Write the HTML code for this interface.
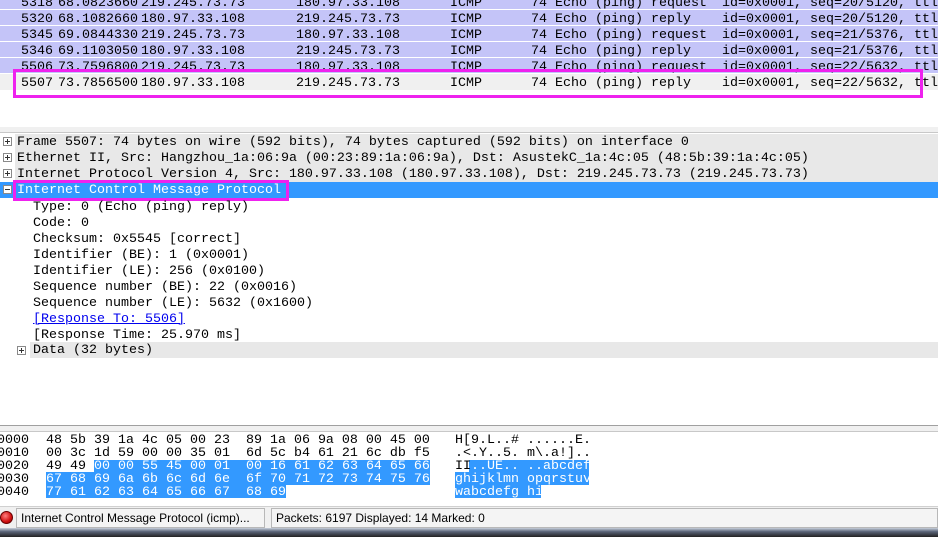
<!DOCTYPE html>
<html><head><meta charset="utf-8"><style>
*{margin:0;padding:0;box-sizing:border-box}
body{width:938px;height:537px;overflow:hidden;background:#fff;position:relative;font-family:"Liberation Mono",monospace;font-size:13.33px;color:#000}
.a{position:absolute;white-space:pre;line-height:16px;margin-top:2px}
.pr{position:absolute;left:0;width:938px;height:15px;background:#c4c4f8}
.pr span{position:absolute;top:2px;line-height:15px;white-space:pre}
.dr{position:absolute;left:15px;right:0;height:16px;background:#e8e8e8}
.pl{position:absolute;width:9px;height:9px;border:1px solid #8a8a8a;background:#fff;font-size:0}
.pl:before{content:"";position:absolute;left:1px;top:3px;width:5px;height:1px;background:#333}
.pl.p:after{content:"";position:absolute;left:3px;top:1px;width:1px;height:5px;background:#333}
.hx{position:absolute;font-size:13.33px;line-height:13px;white-space:pre}
.hl{position:absolute;background:#3399ff;height:13px}
</style></head><body>
<div class="pr" style="top:-6px"><span style="left:21px">5318</span><span style="left:58px">68.0823660</span><span style="left:141px">219.245.73.73</span><span style="left:296px">180.97.33.108</span><span style="left:450px">ICMP</span><span style="left:531px">74 Echo (ping) request</span><span style="left:722px">id=0x0001, seq=20/5120, ttl</span></div>
<div class="pr" style="top:10px"><span style="left:21px">5320</span><span style="left:58px">68.1082660</span><span style="left:141px">180.97.33.108</span><span style="left:296px">219.245.73.73</span><span style="left:450px">ICMP</span><span style="left:531px">74 Echo (ping) reply</span><span style="left:722px">id=0x0001, seq=20/5120, ttl</span></div>
<div class="pr" style="top:26px"><span style="left:21px">5345</span><span style="left:58px">69.0844330</span><span style="left:141px">219.245.73.73</span><span style="left:296px">180.97.33.108</span><span style="left:450px">ICMP</span><span style="left:531px">74 Echo (ping) request</span><span style="left:722px">id=0x0001, seq=21/5376, ttl</span></div>
<div class="pr" style="top:42px"><span style="left:21px">5346</span><span style="left:58px">69.1103050</span><span style="left:141px">180.97.33.108</span><span style="left:296px">219.245.73.73</span><span style="left:450px">ICMP</span><span style="left:531px">74 Echo (ping) reply</span><span style="left:722px">id=0x0001, seq=21/5376, ttl</span></div>
<div class="pr" style="top:58px"><span style="left:21px">5506</span><span style="left:58px">73.7596800</span><span style="left:141px">219.245.73.73</span><span style="left:296px">180.97.33.108</span><span style="left:450px">ICMP</span><span style="left:531px">74 Echo (ping) request</span><span style="left:722px">id=0x0001, seq=22/5632, ttl</span></div>
<div class="pr" style="top:74px;height:16px;background:#f0f0f0"><span style="left:21px;line-height:16px">5507</span><span style="left:58px;line-height:16px">73.7856500</span><span style="left:141px;line-height:16px">180.97.33.108</span><span style="left:296px;line-height:16px">219.245.73.73</span><span style="left:450px;line-height:16px">ICMP</span><span style="left:531px;line-height:16px">74 Echo (ping) reply</span><span style="left:722px;line-height:16px">id=0x0001, seq=22/5632, ttl</span></div>
<div style="position:absolute;left:13px;top:69px;width:910px;height:29px;border:3px solid #ee22ee"></div>
<div style="position:absolute;left:0;top:127px;width:938px;height:6px;background:#f0f0f0;border-bottom:1px solid #c8c8c8"></div>
<div class="dr" style="top:134px"></div><div class="pl p" style="left:3px;top:137px"></div><div class="a" style="left:17px;top:133px">Frame 5507: 74 bytes on wire (592 bits), 74 bytes captured (592 bits) on interface 0</div>
<div class="dr" style="top:150px"></div><div class="pl p" style="left:3px;top:153px"></div><div class="a" style="left:17px;top:149px">Ethernet II, Src: Hangzhou_1a:06:9a (00:23:89:1a:06:9a), Dst: AsustekC_1a:4c:05 (48:5b:39:1a:4c:05)</div>
<div class="dr" style="top:166px"></div><div class="pl p" style="left:3px;top:169px"></div><div class="a" style="left:17px;top:165px">Internet Protocol Version 4, Src: 180.97.33.108 (180.97.33.108), Dst: 219.245.73.73 (219.245.73.73)</div>
<div class="dr" style="top:182px;left:0;background:#3399ff"></div><div class="pl" style="left:3px;top:185px"></div><div class="a" style="left:17px;top:181px;color:#fff">Internet Control Message Protocol</div>
<div style="position:absolute;left:13px;top:180px;width:276px;height:21px;border:3px solid #ee22ee"></div>
<div class="a" style="left:33px;top:198px">Type: 0 (Echo (ping) reply)</div>
<div class="a" style="left:33px;top:214px">Code: 0</div>
<div class="a" style="left:33px;top:230px">Checksum: 0x5545 [correct]</div>
<div class="a" style="left:33px;top:246px">Identifier (BE): 1 (0x0001)</div>
<div class="a" style="left:33px;top:262px">Identifier (LE): 256 (0x0100)</div>
<div class="a" style="left:33px;top:278px">Sequence number (BE): 22 (0x0016)</div>
<div class="a" style="left:33px;top:294px">Sequence number (LE): 5632 (0x1600)</div>
<div class="a" style="left:33px;top:310px;color:#0000ee;text-decoration:underline">[Response To: 5506]</div>
<div class="a" style="left:33px;top:326px">[Response Time: 25.970 ms]</div>
<div class="dr" style="top:342px;left:30px"></div><div class="pl p" style="left:17px;top:346px"></div><div class="a" style="left:33px;top:341px">Data (32 bytes)</div>
<div style="position:absolute;left:0;top:425px;width:938px;height:7px;background:#f0f0f0;border-top:1px solid #a0a0a0;border-bottom:1px solid #c8c8c8"></div>
<div class="hl" style="left:94px;top:460px;width:336px"></div>
<div class="hl" style="left:46px;top:472px;width:384px"></div>
<div class="hl" style="left:46px;top:485px;width:240px"></div>
<div class="hl" style="left:469px;top:460px;width:120px"></div>
<div class="hl" style="left:455px;top:472px;width:134px"></div>
<div class="hl" style="left:455px;top:485px;width:86px"></div>
<div class="hx" style="left:-3px;top:434px">0000
0010
0020
0030
0040</div>
<div class="hx" style="left:46px;top:434px">48 5b 39 1a 4c 05 00 23  89 1a 06 9a 08 00 45 00
00 3c 1d 59 00 00 35 01  6d 5c b4 61 21 6c db f5
49 49 <span style="color:#fff">00 00 55 45 00 01  00 16 61 62 63 64 65 66</span>
<span style="color:#fff">67 68 69 6a 6b 6c 6d 6e  6f 70 71 72 73 74 75 76</span>
<span style="color:#fff">77 61 62 63 64 65 66 67  68 69</span></div>
<div class="hx" style="left:455px;top:434px">H[9.L..# ......E.
.&lt;.Y..5. m\.a!]..
II<span style="color:#fff">..UE.. ..abcdef</span>
<span style="color:#fff">ghijklmn opqrstuv</span>
<span style="color:#fff">wabcdefg hi</span></div>
<div style="position:absolute;left:0;top:506px;width:938px;height:22px;background:#f0f0f0;border-top:1px solid #d0d0d0"></div>
<div style="position:absolute;left:0;top:511px;width:13px;height:13px;border-radius:50%;background:radial-gradient(circle at 40% 35%,#ff8080,#d01010 60%,#800000);border:1px solid #600"></div>
<div style="position:absolute;left:16px;top:508px;width:249px;height:20px;border:1px solid #b8b8b8;background:#f4f4f4;font-family:'Liberation Sans',sans-serif;font-size:12px;line-height:18px;padding-left:4px;white-space:pre;overflow:hidden">Internet Control Message Protocol (icmp)...</div>
<div style="position:absolute;left:271px;top:508px;width:667px;height:20px;border:1px solid #b8b8b8;background:#f4f4f4;font-family:'Liberation Sans',sans-serif;font-size:12px;line-height:18px;padding-left:4px;white-space:pre">Packets: 6197 Displayed: 14 Marked: 0</div>
<div style="position:absolute;left:0;top:528px;width:938px;height:9px;background:linear-gradient(#c8d0dc,#5a6478 40%,#222 100%)"></div>
</body></html>
